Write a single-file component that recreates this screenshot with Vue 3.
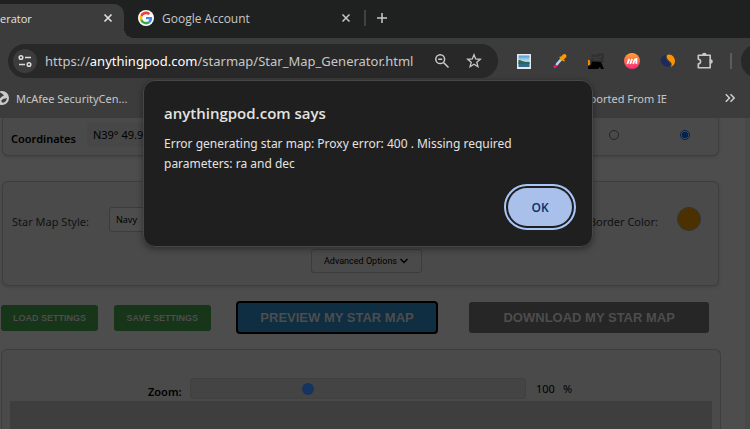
<script setup>
import { ref } from 'vue'

const coordinates = ref("N39° 49.99'")
const shape = ref('right')
const mapStyle = ref('Navy')
const borderColor = ref('#4c3100')
const zoom = ref(100)
const open = ref(true)
const url = ref({ scheme: 'https://', host: 'anythingpod.com', path: '/starmap/Star_Map_Generator.html' })
</script>

<template>
  <div class="browser">
    <header class="tabs">
      <div class="tab active">
        <span>erator</span>
        <button class="icon" aria-label="Close tab">
          <svg width="10" height="10" viewBox="0 0 10 10"><path d="M1.500 1.500l7 7M8.500 1.500l-7 7" stroke="#dedede" stroke-width="1.700" /></svg>
        </button>
      </div>
      <div class="tab other">
        <svg width="16" height="16" viewBox="0 0 48 48">
          <circle cx="24" cy="24" r="24" fill="#fff" />
          <g transform="translate(4.800 4.800) scale(.8)">
            <path fill="#EA4335" d="M24 9.500c3.540 0 6.710 1.220 9.210 3.600l6.850-6.850C35.900 2.380 30.470 0 24 0 14.620 0 6.510 5.380 2.560 13.220l7.980 6.190C12.430 13.720 17.740 9.500 24 9.500z" />
            <path fill="#4285F4" d="M46.980 24.550c0-1.570-.15-3.090-.38-4.550H24v9.020h12.940c-.58 2.960-2.260 5.480-4.780 7.180l7.730 6c4.510-4.180 7.090-10.360 7.090-17.650z" />
            <path fill="#FBBC05" d="M10.530 28.590c-.48-1.450-.76-2.990-.76-4.590s.27-3.140.76-4.590l-7.980-6.190C.92 16.460 0 20.120 0 24c0 3.880.92 7.540 2.560 10.780l7.970-6.190z" />
            <path fill="#34A853" d="M24 48c6.480 0 11.930-2.130 15.890-5.810l-7.730-6c-2.150 1.450-4.920 2.300-8.160 2.300-6.260 0-11.570-4.220-13.470-9.910l-7.980 6.190C6.510 42.620 14.620 48 24 48z" />
          </g>
        </svg>
        <span class="grow">Google Account</span>
        <button class="icon" aria-label="Close tab">
          <svg width="10" height="10" viewBox="0 0 10 10"><path d="M1.500 1.500l7 7M8.500 1.500l-7 7" stroke="#c7c7c7" stroke-width="1.500" /></svg>
        </button>
      </div>
      <i class="tab-line"></i>
      <button class="icon" aria-label="New tab">
        <svg width="10" height="10" viewBox="0 0 10 10"><path d="M5 0v10M0 5h10" stroke="#c7c7c7" stroke-width="1.500" /></svg>
      </button>
    </header>

    <div class="toolbar">
      <div class="omnibox">
        <button class="site" aria-label="Site information">
          <svg width="14" height="14" viewBox="0 0 14 14" fill="none" stroke="#dcdcdc" stroke-width="1.500">
            <circle cx="3" cy="3.500" r="1.800" /><path d="M7 3.500h6M1 10.500h6" /><circle cx="11" cy="10.500" r="1.800" />
          </svg>
        </button>
        <div class="url">{{ url.scheme }}<b>{{ url.host }}</b>{{ url.path }}</div>
        <button class="icon" aria-label="Zoom out">
          <svg width="16" height="16" viewBox="0 0 16 16" fill="none" stroke="#c9c9c9" stroke-width="1.500">
            <circle cx="6.200" cy="6.200" r="4.400" /><path d="M9.500 9.500l5 5M4.200 6.200h4" />
          </svg>
        </button>
        <button class="icon" aria-label="Bookmark">
          <svg width="16" height="16" viewBox="0 0 16 16" fill="none" stroke="#c9c9c9" stroke-width="1.300">
            <path d="M8 1.800l1.700 4.200 4.600.3-3.500 2.900 1.100 4.500L8 11.300l-3.900 2.400 1.100-4.500-3.500-2.900 4.600-.3z" />
          </svg>
        </button>
      </div>
      <div class="extensions">
        <button class="icon" aria-label="Image tool">
          <svg width="16" height="16" viewBox="0 0 16 16">
            <defs>
              <linearGradient id="sky" x2="0" y2="1"><stop stop-color="#4c9ad8" /><stop offset=".5" stop-color="#c4e3f2" /><stop offset=".6" stop-color="#3c6b66" /><stop offset="1" stop-color="#2b6da0" /></linearGradient>
            </defs>
            <path d="M1 1h14v15H1z" fill="#e8eaea" /><path d="M2.500 2.500h11v11.500h-11z" fill="url(#sky)" />
            <path d="M2.500 7c3 0 4 2 11 2.500v1.500h-11z" fill="#2f6654" />
          </svg>
        </button>
        <button class="icon" aria-label="Color picker">
          <svg width="16" height="16" viewBox="0 0 16 16" stroke-linecap="round">
            <path d="M2.800 13.800L5.500 11" stroke="#e91e63" stroke-width="2.600" /><path d="M5 11L9.500 6" stroke="#a5dcf5" stroke-width="2.600" />
            <path d="M9.800 5.700l2.700-2.700" stroke="#ff9800" stroke-width="4" /><path d="M8.200 4.200l3.800 3.600" stroke="#ff9800" stroke-width="1.500" />
          </svg>
        </button>
        <button class="icon" aria-label="Fox extension">
          <svg width="16" height="16" viewBox="0 0 16 16">
            <path d="M3 2l3-1 2 1 4-2 4 1v3l-1 2 1 3-2 1H3l-1-3 2-2z" fill="#303030" /><path d="M4 4l4 1 6-2M5 7l8-1" stroke="#404040" fill="none" />
            <path d="M0 6.500l2 1v4L0 13z" fill="#f28a00" /><path d="M4 8.500L13 9l3 7h-3l-1-2-2 2H0v-3l3-1z" fill="#020202" />
          </svg>
        </button>
        <button class="icon" aria-label="Market extension">
          <svg width="16" height="16" viewBox="0 0 16 16">
            <defs><linearGradient id="hot" x2="0" y2="1"><stop stop-color="#ffa52b" /><stop offset="1" stop-color="#ff277e" /></linearGradient></defs>
            <circle cx="8" cy="8" r="8" fill="url(#hot)" />
            <path d="M3.300 10.800l2-5M6.200 10.800l2-5M9.100 10.800l2-5M12.400 5v5.800" fill="none" stroke="#fff" stroke-width="1.800" />
          </svg>
        </button>
        <button class="icon" aria-label="Traffic extension">
          <svg width="16" height="16" viewBox="0 0 16 16">
            <path d="M6 2c-4 0-6 4-5 7s4 5.500 8 4.500c2-1 1-4-1-5S5 5 6 2z" fill="#1d2a5e" />
            <path d="M7 2c4-2 8 2 8 6 0 3-2 5-4 6 1-2 1-4-1-5.500S6 5 7 2z" fill="#ff9200" />
          </svg>
        </button>
        <button class="icon" aria-label="Extensions">
          <svg width="18" height="18" viewBox="0 0 18 18" fill="none" stroke="#c9c9c9" stroke-width="1.600" stroke-linejoin="round">
            <path d="M2.300 3.300h11.900v12.400H2.300v-3.800c3 0 3-4.600 0-4.600z" /><path d="M6.800 3a1.500 1.500 0 0 1 3 0zM14.500 8a1.500 1.500 0 0 1 0 3z" fill="#c9c9c9" />
          </svg>
        </button>
        <i class="ext-line"></i>
        <i class="avatar"></i>
      </div>
    </div>

    <nav class="bookmarks">
      <a href="#">
        <svg width="14" height="14" viewBox="0 0 14 14"><circle cx="7" cy="7" r="7" fill="#c9c9c9" /><path d="M4 1.500c3 0 3 2 5 2.500-1 2-3 1-3 3L2 6zM8 8l4-1-1 3-3 2-2-2z" fill="#3c3c3c" /></svg>
        McAfee SecurityCen...
      </a>
      <a href="#" class="imported">Imported From IE</a>
      <button class="icon" aria-label="More bookmarks">
        <svg width="10" height="10" viewBox="0 0 10 10" fill="none" stroke="#d0d0d0" stroke-width="1.500"><path d="M.8 1.200L4.500 5 .8 8.800M5.500 1.200L9.200 5 5.500 8.800" /></svg>
      </button>
    </nav>

    <main class="page">
      <div class="content">
        <section class="panel first">
          <label for="coords" class="strong">Coordinates</label>
          <input id="coords" v-model="coordinates" class="coords" type="text" />
          <div class="radios">
            <input v-model="shape" type="radio" name="shape" value="left" aria-label="Option one" />
            <input v-model="shape" type="radio" name="shape" value="right" aria-label="Option two" />
          </div>
        </section>

        <section class="panel style">
          <div class="style-row">
            <label for="map-style">Star Map Style:</label>
            <select id="map-style" v-model="mapStyle"><option>Navy</option></select>
            <label for="border-color" class="border-label">Border Color:</label>
            <input id="border-color" v-model="borderColor" type="color" />
          </div>
          <button class="advanced">
            Advanced Options
            <svg width="10" height="8" viewBox="0 0 10 8"><path d="M1.500 2L5 5.500 8.500 2" fill="none" stroke="#000" stroke-width="1.500" /></svg>
          </button>
        </section>

        <div class="actions">
          <button class="green">LOAD SETTINGS</button>
          <button class="green">SAVE SETTINGS</button>
          <button class="preview">PREVIEW MY STAR MAP</button>
          <button class="download">DOWNLOAD MY STAR MAP</button>
        </div>

        <section class="panel result">
          <div class="zoom-row">
            <label for="zoom" class="strong">Zoom:</label>
            <input id="zoom" v-model="zoom" type="range" min="0" max="294" />
            <output for="zoom">{{ zoom }}</output>
            <span>%</span>
          </div>
          <div class="canvas"></div>
        </section>
      </div>
      <div class="edge"></div>
    </main>

    <div v-if="open" class="dialog" role="alertdialog" aria-labelledby="dlg-title" aria-describedby="dlg-text">
      <h1 id="dlg-title">anythingpod.com says</h1>
      <p id="dlg-text">Error generating star map: Proxy error: 400 . Missing required parameters: ra and dec</p>
      <button class="ok" @click="open = false">OK</button>
    </div>
  </div>
</template>

<style>
body {
  background: #4d4d4d;
}
</style>

<style scoped>
* {
  box-sizing: border-box;
}
.browser {
  position: relative;
  display: flex;
  flex-direction: column;
  min-height: 100vh;
  overflow: hidden;
  font-family: "Open Sans", "Noto Sans", sans-serif;
  font-size: 12px;
  color: #c7c7c7;
}
button,
input,
select {
  font-family: inherit;
  margin: 0;
}
.icon {
  display: flex;
  flex: none;
  padding: 0;
  border: 0;
  background: none;
}
svg {
  display: block;
  flex: none;
}
.tabs {
  display: flex;
  align-items: center;
  height: 38px;
  background: #1f2120;
}
.tab {
  display: flex;
  align-items: center;
}
.active {
  position: relative;
  justify-content: space-between;
  align-self: flex-end;
  width: 124px;
  height: 34px;
  padding: 0 11px 6px 0;
  border-radius: 0 10px 0 0;
  background: #3c3c3c;
  font-size: 11px;
  color: #e3e3e3;
}
.active::after {
  content: "";
  position: absolute;
  left: 100%;
  bottom: 0;
  width: 10px;
  height: 10px;
  background: radial-gradient(circle at 100% 0, transparent 10px, #3c3c3c 10px);
}
.other {
  width: 213px;
  gap: 8px;
  margin-left: 14px;
}
.tab,
.tab-line,
.tabs > .icon {
  margin-bottom: 2px;
}
.tab.active {
  margin-bottom: 0;
}
.grow {
  flex: 1;
}
.tab-line {
  width: 2px;
  height: 16px;
  margin-left: 13px;
  margin-right: 11px;
  background: #424242;
}
.toolbar {
  display: flex;
  align-items: center;
  gap: 18px;
  height: 46px;
  padding-left: 8px;
  background: #3c3c3c;
}
.omnibox {
  display: flex;
  flex: 1;
  align-items: center;
  gap: 16px;
  min-width: 0;
  height: 34px;
  padding: 0 16px 0 5px;
  border-radius: 17px;
  background: #282828;
}
.site {
  display: flex;
  flex: none;
  align-items: center;
  justify-content: center;
  width: 24px;
  height: 24px;
  padding: 0;
  border: 0;
  border-radius: 50%;
  background: #3c3c3c;
}
.url {
  flex: 1;
  margin-left: -8px;
  overflow: hidden;
  white-space: nowrap;
  font-family: "Noto Sans", "Open Sans", sans-serif;
  font-size: 13px;
  line-height: 20px;
}
.url b {
  font-weight: 400;
  color: #fff;
}
.extensions {
  display: flex;
  align-items: center;
  gap: 20px;
  width: 234px;
  overflow: hidden;
}
.ext-line {
  flex: none;
  width: 2px;
  height: 16px;
  margin: 0 -11px 0 -4px;
  background: #5c5c5c;
}
.avatar {
  flex: none;
  width: 34px;
  height: 34px;
  border-radius: 50%;
  background: #282828;
}
.bookmarks {
  display: flex;
  align-items: center;
  height: 34px;
  padding: 0 15px 6px 0;
  background: #3c3c3c;
  font-family: "Noto Sans", "Open Sans", sans-serif;
  font-size: 11px;
}
.bookmarks a {
  display: flex;
  align-items: center;
  gap: 7px;
  margin-left: -5px;
  color: inherit;
  text-decoration: none;
}
.bookmarks .imported {
  margin-left: auto;
  margin-right: 58px;
}
.page {
  display: flex;
  flex: 1;
  color: #000;
  font-family: "Noto Sans", "Open Sans", sans-serif;
  font-size: 11px;
}
.content {
  display: flex;
  flex: 1;
  flex-direction: column;
  min-width: 0;
  padding-right: 26px;
}
.edge {
  width: 5px;
  background: #454a49;
}
.panel {
  border: 1px solid #3e3e3e;
  border-radius: 6px;
  background: #4a4a4a;
}
.strong {
  font-weight: 600;
}
.first {
  display: flex;
  align-items: center;
  height: 38px;
  margin-left: 2px;
  padding: 0 28px 4px 8px;
  border-top: 0;
  border-radius: 0 0 6px 6px;
  box-shadow: 0 1px 3px #424242;
}
.first .strong {
  padding-top: 8px;
}
.coords {
  width: 160px;
  height: 24px;
  margin-left: 11px;
  padding: 0 6px;
  border: 0;
  background: #474747;
  font-size: 11px;
  color: #000;
}
.radios {
  display: flex;
  gap: 61px;
  margin-left: auto;
}
input[type="radio"] {
  appearance: none;
  width: 10px;
  height: 10px;
  border: 1px solid #242424;
  border-radius: 50%;
}
input[type="radio"]:checked {
  border-color: #002350;
  background: radial-gradient(circle, #002350 3px, transparent 3px);
}
.style {
  display: flex;
  flex-direction: column;
  align-items: center;
  margin: 25px 0 0 2px;
  padding: 24px 17px 12px 9px;
  box-shadow: 0 1px 3px #424242;
}
.style-row {
  display: flex;
  align-items: center;
  align-self: stretch;
  height: 26px;
}
.style-row label {
  padding-top: 5px;
  color: #111;
}
select {
  appearance: none;
  width: 120px;
  height: 25px;
  margin-left: 20px;
  padding: 0 6px;
  border: 1px solid #3c3c3c;
  border-radius: 3px;
  background: #4d4d4d;
  font-size: 9px;
  color: #000;
}
.style-row .border-label {
  margin-left: auto;
  margin-right: 19px;
}
input[type="color"] {
  appearance: none;
  width: 24px;
  height: 24px;
  padding: 0;
  overflow: hidden;
  border: 1px solid #303030;
  border-radius: 50%;
  background: none;
}
input[type="color"]::-webkit-color-swatch-wrapper {
  padding: 0;
}
input[type="color"]::-webkit-color-swatch {
  border: 0;
}
.advanced {
  display: flex;
  align-items: center;
  gap: 2px;
  height: 24px;
  margin: 17px 0 0 20px;
  padding: 0 12px;
  border: 1px solid #3c3c3c;
  border-radius: 3px;
  background: #4a4a4a;
  font-family: Roboto, "Liberation Sans", sans-serif;
  font-size: 9px;
  color: #000;
}
.actions {
  display: flex;
  align-items: center;
  height: 33px;
  margin: 15px 0 0 1px;
}
.actions button {
  height: 31px;
  padding: 0;
  border: 0;
  border-radius: 3px;
  font-family: "Liberation Sans", sans-serif;
  font-weight: 700;
  color: #4d4d4d;
  font-size: 13px;
}
.actions .green {
  flex: 97;
  height: 26px;
  margin-right: 16px;
  background: #173518;
  font-size: 9px;
}
.actions .preview {
  flex: 199;
  height: 33px;
  margin: 0 31px 0 9px;
  border: 2px solid #000;
  border-radius: 4px;
  background: #0f2e42;
}
.actions .download {
  flex: 240;
  margin-right: 10px;
  background: #262626;
}
.result {
  display: flex;
  flex: 1;
  flex-direction: column;
  margin: 15px 0 0 1px;
  margin-right: -2px;
  padding: 28px 8px 0;
  border-bottom: 0;
  border-radius: 6px 6px 0 0;
}
.zoom-row {
  display: flex;
  align-items: center;
  height: 21px;
  padding-left: 138px;
}
.zoom-row .strong {
  width: 34px;
  padding-top: 6px;
}
.zoom-row output {
  margin: 0 8px 0 10px;
}
input[type="range"] {
  appearance: none;
  flex: 0 1 336px;
  height: 21px;
  margin-left: 8px;
  padding: 0 4px;
  border: 1px solid #404040;
  border-radius: 3px;
  background: #444;
}
input[type="range"]::-webkit-slider-thumb {
  appearance: none;
  width: 12px;
  height: 12px;
  border-radius: 50%;
  background: #163460;
}
.canvas {
  flex: 1;
  min-height: 28px;
  margin-top: 2px;
  background: #3e3e3e;
}
.dialog {
  position: absolute;
  top: 80px;
  left: 50%;
  width: 450px;
  margin-left: -232px;
  padding: 22px 20px 20px;
  border: 1px solid #474747;
  border-radius: 12px;
  background: #1f1f1f;
  box-shadow: 0 2px 6px rgba(0, 0, 0, 0.4);
  color: #e3e3e3;
}
.dialog h1 {
  margin: 0 0 11px;
  font-size: 15px;
  line-height: 20px;
  font-weight: 600;
}
.dialog p {
  margin: 0 30px 14px 0;
  font-family: "Noto Sans", "Open Sans", sans-serif;
  font-size: 12px;
  line-height: 20px;
}
.ok {
  display: block;
  width: 64px;
  height: 38px;
  margin-left: auto;
  border: 0;
  border-radius: 19px;
  outline: 2px solid #a8c7fa;
  outline-offset: 2px;
  background: #a8c0ea;
  font-size: 12px;
  font-weight: 600;
  color: #062e6f;
}
</style>
